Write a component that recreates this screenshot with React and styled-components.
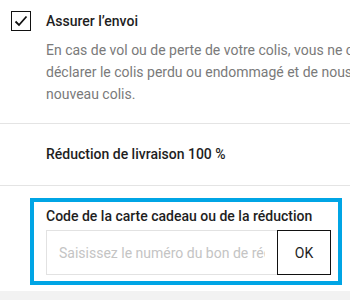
import React from 'react';
import styled, { createGlobalStyle } from 'styled-components';

const GlobalStyle = createGlobalStyle`
  body {
    margin: 0;
    background: #fff;
    font-family: Roboto, "Liberation Sans", sans-serif;
  }
`;

const Page = styled.div`
  width: 350px;
  height: 300px;
  overflow: hidden;
  background: #fff;
`;

const Option = styled.div`
  display: flex;
  gap: 15px;
  padding: 11px 0 0 11px;
`;

const Check = styled.div`
  flex: none;
  width: 18px;
  height: 18px;
  border: 1px solid #111;
  display: flex;
  align-items: center;
  justify-content: center;
`;

const OptionBody = styled.div`
  padding-top: 2px;
`;

const OptionTitle = styled.div`
  font-size: 14px;
  font-weight: 500;
  color: #1e1e1e;
  line-height: 16px;
`;

const Description = styled.p`
  margin: 10px 0 0;
  font-size: 14px;
  line-height: 22px;
  color: #7a7a7a;
  white-space: nowrap;
`;

const Row = styled.div`
  border-top: 1px solid #e4e4e4;
  margin-top: ${p => p.$offset}px;
  padding: 22px 0 22px 46px;
  font-size: 14px;
  font-weight: 500;
  color: #1e1e1e;
  line-height: 17px;
`;

const Divider = styled.div`
  border-top: 1px solid #e4e4e4;
`;

const CodeBox = styled.div`
  margin: 12px 8px 0 30px;
  border: 4px solid #00a5e5;
  padding: 4px 7px 6px 12px;
`;

const CodeTitle = styled.div`
  font-size: 14px;
  font-weight: 500;
  color: #1e1e1e;
  line-height: 20px;
  padding-bottom: 4px;
`;

const Field = styled.div`
  display: flex;
  height: 45px;
`;

const Input = styled.input`
  flex: 1;
  min-width: 0;
  height: 45px;
  box-sizing: border-box;
  border: 1px solid #e2e2e2;
  border-right: none;
  padding: 0 12px;
  font-family: inherit;
  font-size: 14px;
  outline: none;
  &::placeholder {
    color: #c4c4c4;
  }
`;

const OkButton = styled.button`
  flex: none;
  width: 54px;
  height: 45px;
  box-sizing: border-box;
  border: 1px solid #111;
  background: #fff;
  font-family: inherit;
  font-size: 14px;
  color: #1e1e1e;
`;

const Footer = styled.div`
  margin-top: 6px;
  height: 20px;
  background: #f2f2f2;
`;

export default function App() {
  return (
    <Page>
      <GlobalStyle />
      <Option>
        <Check>
          <svg width="14" height="12" viewBox="0 0 14 12">
            <path d="M1.5 6.5 L5 10 L12.5 1.5" fill="none" stroke="#111" strokeWidth="1.8" />
          </svg>
        </Check>
        <OptionBody>
          <OptionTitle>Assurer l’envoi</OptionTitle>
          <Description>
            En cas de vol ou de perte de votre colis, vous ne courez aucun risque : il suffit de
            <br />
            déclarer le colis perdu ou endommagé et de nous vous enverrons un
            <br />
            nouveau colis.
          </Description>
        </OptionBody>
      </Option>
      <Row $offset={18}>Réduction de livraison 100 %</Row>
      <Divider />
      <CodeBox>
        <CodeTitle>Code de la carte cadeau ou de la réduction</CodeTitle>
        <Field>
          <Input placeholder="Saisissez le numéro du bon de réduction" />
          <OkButton>OK</OkButton>
        </Field>
      </CodeBox>
      <Footer />
    </Page>
  );
}
